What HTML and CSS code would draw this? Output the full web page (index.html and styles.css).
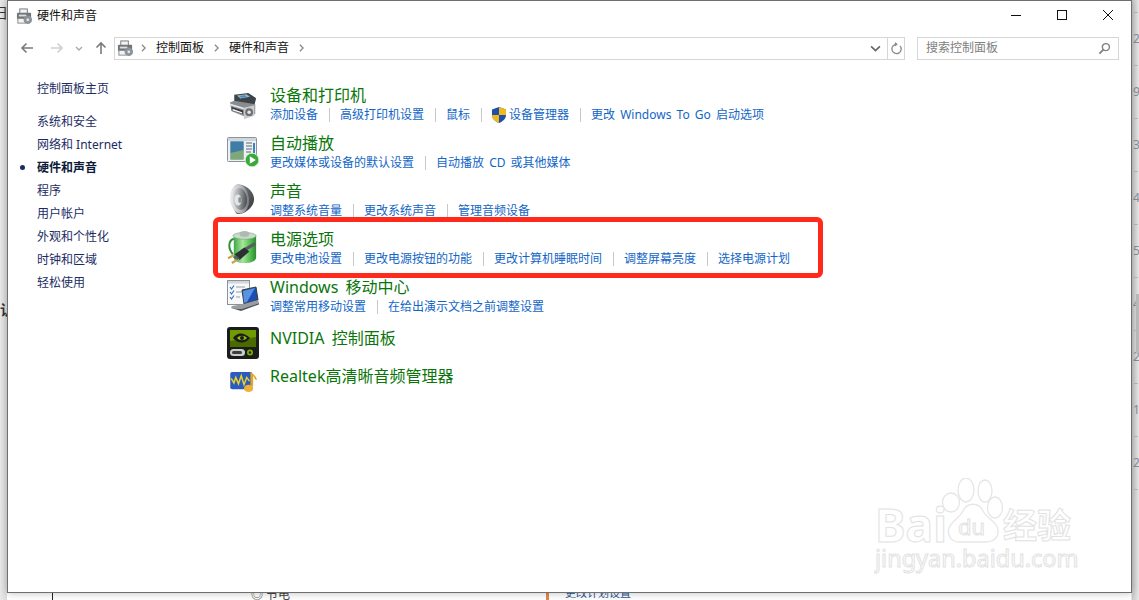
FILE: index.html
```html
<!DOCTYPE html>
<html lang="zh-CN">
<head>
<meta charset="utf-8">
<title>硬件和声音</title>
<link rel="stylesheet" href="styles.css">
</head>
<body>
<svg width="0" height="0" class="defs">
  <defs>
    <linearGradient id="cone" x1="0" y1="0" x2="1" y2="0.2">
      <stop offset="0" stop-color="#f4f5f6"/>
      <stop offset=".55" stop-color="#c4c7ca"/>
      <stop offset="1" stop-color="#7f8387"/>
    </linearGradient>
    <linearGradient id="inner" x1="0" y1="0" x2="1" y2="0.3">
      <stop offset="0" stop-color="#e6e8ea"/>
      <stop offset=".5" stop-color="#a2a6a9"/>
      <stop offset="1" stop-color="#55585b"/>
    </linearGradient>
    <linearGradient id="back" x1="0" y1="0" x2="1" y2="1">
      <stop offset="0" stop-color="#8a8d90"/>
      <stop offset="1" stop-color="#2f3133"/>
    </linearGradient>
    <linearGradient id="cell" x1="0" y1="0" x2="1" y2="0">
      <stop offset="0" stop-color="#3fa845"/>
      <stop offset=".4" stop-color="#a6e69a"/>
      <stop offset=".75" stop-color="#52bb52"/>
      <stop offset="1" stop-color="#2a8a30"/>
    </linearGradient>
    <symbol id="chev" viewBox="0 0 6 10">
      <path d="M1 1l4 4-4 4" fill="none" stroke="#8a8a8a" stroke-width="1.600"/>
    </symbol>
    <symbol id="devices" viewBox="0 0 32 32">
      <path d="M6 3 22 1l9 6-2 8-23-3z" fill="#3d4347"/>
      <path d="M9 4l11-1.500 4 3-11 2z" fill="#8fb6cf"/>
      <path d="M12 4.500l6-.8 2 1.800-6 1z" fill="#4d87bb"/>
      <path d="M1 12l5-2 24 4v11l-12 3L3 22z" fill="#8a8d90"/>
      <path d="M1 13l16 5v2L1 15z" fill="#e8e8e8"/>
      <path d="M3 17l13 4v4L3 21z" fill="#34383c"/>
      <path d="M4 19l11 4v1.500L4 21z" fill="#f4f4f4"/>
      <path d="M17 18l12-3v12l-12 4z" fill="#c9cbcd"/>
      <circle cx="23" cy="23" r="4.500" fill="#6d7073"/>
      <circle cx="23" cy="23" r="2" fill="#e4e4e4"/>
    </symbol>
    <symbol id="autoplay" viewBox="0 0 32 32">
      <rect x=".5" y="2.500" width="29" height="24" rx="1" fill="#eef1f4" stroke="#8c9299"/>
      <rect x="1" y="3" width="28" height="3" fill="#cfd6dc"/>
      <rect x="3.500" y="6.500" width="13" height="18" fill="#5f8f97"/>
      <path d="M3.500 6.500h13v9L3.500 18z" fill="#3f7ca8"/>
      <path d="M3.500 18l13-3v9.500h-13z" fill="#7fa878"/>
      <path d="M19 8h6M19 11h6M19 14h6M19 17h5" stroke="#8d959b" stroke-width="1.400"/>
      <rect x="26" y="8" width="2" height="10" fill="#3f82c0"/>
      <circle cx="25" cy="25" r="6.800" fill="#3aa83a" stroke="#d6f0d0" stroke-width=".8"/>
      <path d="M22.800 21.200v7.600l6-3.800z" fill="#fff"/>
    </symbol>
    <symbol id="speaker" viewBox="0 0 32 32">
      <path d="M9 2C15 0 26 6 27 15c1 8-8 16-16 16C5 31 3 4 9 2z" fill="url(#back)"/>
      <ellipse cx="12.500" cy="16" rx="9.500" ry="14.500" fill="url(#cone)" transform="rotate(-6 12.500 16)"/>
      <ellipse cx="13" cy="16" rx="7" ry="11" fill="url(#inner)" transform="rotate(-6 13 16)"/>
      <ellipse cx="11" cy="17" rx="3.500" ry="5.500" fill="#e2e4e6" transform="rotate(-6 11 17)"/>
      <ellipse cx="13" cy="17" rx="1.800" ry="3" fill="#8f9396"/>
    </symbol>
    <symbol id="battery" viewBox="0 0 34 36">
      <path d="M7 5h22a1 1 0 0 1 1 1v22c0 4-5 6-12 6s-11-2-11-6z" fill="url(#cell)"/>
      <ellipse cx="18" cy="6" rx="12" ry="3.500" fill="#c5ddc8" stroke="#7d9a80" stroke-width=".6"/>
      <ellipse cx="18" cy="4" rx="5" ry="3" fill="#aeb9b0"/>
      <path d="M7 9C1 11 1 19 6 25" fill="none" stroke="#2f8f33" stroke-width="2"/>
      <path d="M15 22 29 14" stroke="#5a5d60" stroke-width="3.500"/>
      <path d="M8 25l10-7 5 4-10 9z" fill="#2c2f33"/>
      <path d="M9 26l4 3 -2 2-5-3z" fill="#5b5e61"/>
      <path d="M7 26 1 29M10 31l-5 3" stroke="#c6a24a" stroke-width="2.200"/>
    </symbol>
    <symbol id="mobile" viewBox="0 0 32 32">
      <rect x=".5" y="1.500" width="22" height="24" fill="#f8f8f8" stroke="#8c9299"/>
      <rect x="1" y="2" width="21" height="2.500" fill="#cfd6dc"/>
      <path d="M3 8l1.500 2L7 6.500M3 13l1.500 2L7 11.500M3 18l1.500 2L7 16.500" fill="none" stroke="#2f73c5" stroke-width="1.200"/>
      <path d="M9 8h9M9 13h6M9 18h4" stroke="#9aa0a6" stroke-width="1.200"/>
      <path d="M15 11l14-3 2 13-14 4z" fill="#1c4fb0" stroke="#3a3d40"/>
      <path d="M16 12l12-3-8 14-3 .8z" fill="#5b93e3"/>
      <path d="M17 25l14-4 1 3-18 6-10-1 1-2z" fill="#9a9da0"/>
      <path d="M4 29l10 1 18-6v1.500L14 32z" fill="#55585b"/>
    </symbol>
    <symbol id="nvidia" viewBox="0 0 32 32">
      <rect width="32" height="32" rx="3" fill="#1a1c1c"/>
      <rect x="3" y="3" width="26" height="17" fill="#4a6a00"/>
      <path d="M3 3h26v7L3 14z" fill="#6f9a00"/>
      <path d="M6 11c4-6 11-6 17 0-5 6-12 6-17 0z" fill="#1a1c1c"/>
      <path d="M10 11c3-3 7-3 10 0-3 3-7 3-10 0z" fill="#91c400"/>
      <circle cx="15" cy="11" r="2" fill="#1a1c1c"/>
      <rect x="3" y="22" width="15" height="7" rx="3.500" fill="#c9cbcb"/>
      <rect x="5" y="24" width="10" height="3" rx="1.500" fill="#3c3e3e"/>
      <circle cx="23" cy="25.500" r="3" fill="#7bb000"/>
      <circle cx="23" cy="25.500" r="1.200" fill="#1a1c1c"/>
    </symbol>
    <symbol id="realtek" viewBox="0 0 32 24">
      <rect x="1" y="1" width="24" height="19" rx="2" fill="#2a5cc0"/>
      <path d="M2 8l3 5 2-6 3 7 3-9 3 10 3-8 3 4" fill="none" stroke="#f0d020" stroke-width="1.600"/>
      <path d="M23 1c3 2 7 5 7 9l-2-1-2-4v11h-3z" fill="#e2a52c"/>
      <ellipse cx="21" cy="19" rx="5" ry="4" fill="#eeb032"/>
    </symbol>
    <symbol id="cp" viewBox="0 0 18 18">
      <rect x="4" y="1" width="8" height="5" fill="#f2f2f2" stroke="#777"/>
      <rect x="1" y="5" width="15" height="7" rx="1" fill="#6f757a"/>
      <rect x="3" y="7" width="8" height="2" fill="#dcdcdc"/>
      <rect x="2" y="11" width="8" height="5" fill="#f4f4f4" stroke="#888"/>
      <circle cx="12.500" cy="12.500" r="4.500" fill="#8d9398"/>
      <circle cx="12.500" cy="12.500" r="1.500" fill="#dfe8f0"/>
    </symbol>
  </defs>
</svg>

<main class="desktop">
  <div class="behind behind-top">日</div>
  <div class="behind behind-left">认</div>
  <div class="ruler-ticks"></div>
  <div class="ruler">
    <span>2</span><span>9</span><span>3</span><span>4</span><span>5</span><span>4</span><span>2</span><span>1</span><span>2</span>
  </div>
  <div class="scroll-thumb"></div>
  <div class="under-line"></div>
  <div class="under-orange"></div>
  <div class="under-radio">◎ 节电</div>
  <div class="under-link">更改计划设置</div>

  <section class="window">
    <header class="titlebar">
      <svg class="title-icon"><use href="#cp"/></svg>
      <span class="title-text">硬件和声音</span>
      <div class="controls">
        <svg class="ctl" viewBox="0 0 46 30"><path d="M18 15.500h10" stroke="#111" fill="none"/></svg>
        <svg class="ctl" viewBox="0 0 46 30"><rect x="18.500" y="10.500" width="9" height="9" stroke="#111" fill="none"/></svg>
        <svg class="ctl" viewBox="0 0 46 30"><path d="M18 10l10 10M28 10L18 20" stroke="#111" fill="none"/></svg>
      </div>
    </header>

    <nav class="navbar">
      <svg class="nav-btn" viewBox="0 0 16 16"><path d="M14 8H3M7.500 3.500 3 8l4.500 4.500" fill="none" stroke="#7a7a7a" stroke-width="1.600"/></svg>
      <svg class="nav-btn dim" viewBox="0 0 16 16"><path d="M2 8h11M8.500 3.500 13 8l-4.500 4.500" fill="none" stroke="#cfcfcf" stroke-width="1.600"/></svg>
      <svg class="nav-drop" viewBox="0 0 10 10"><path d="M2 4l3 3 3-3" fill="none" stroke="#a8a8a8" stroke-width="1.400"/></svg>
      <svg class="nav-btn" viewBox="0 0 16 16"><path d="M8 14V3M3.500 7.500 8 3l4.500 4.500" fill="none" stroke="#7a7a7a" stroke-width="1.600"/></svg>
      <div class="address">
        <svg class="addr-icon"><use href="#cp"/></svg>
        <span class="crumb-sep"><svg><use href="#chev"/></svg></span>
        <span class="crumb">控制面板</span>
        <span class="crumb-sep"><svg><use href="#chev"/></svg></span>
        <span class="crumb">硬件和声音</span>
        <span class="crumb-sep"><svg><use href="#chev"/></svg></span>
        <svg class="addr-drop" viewBox="0 0 10 10"><path d="M1 3l4 4 4-4" fill="none" stroke="#666" stroke-width="1.500"/></svg>
        <div class="refresh">
          <svg viewBox="0 0 14 14"><path d="M10.800 4.200A5 5 0 1 1 7 2.500H5M5.500.8 7.300 2.500 5.500 4.200" fill="none" stroke="#8a8a8a" stroke-width="1.400"/></svg>
        </div>
      </div>
      <div class="search">
        <span>搜索控制面板</span>
        <svg viewBox="0 0 14 14"><circle cx="8.500" cy="5.500" r="3.800" fill="none" stroke="#808080" stroke-width="1.500"/><path d="M5.800 8.200 1.500 12.500" stroke="#808080" stroke-width="2"/></svg>
      </div>
    </nav>

    <div class="body">
      <aside class="sidebar">
        <a class="side-home">控制面板主页</a>
        <a>系统和安全</a>
        <a>网络和 Internet</a>
        <a class="current">硬件和声音</a>
        <a>程序</a>
        <a>用户帐户</a>
        <a>外观和个性化</a>
        <a>时钟和区域</a>
        <a>轻松使用</a>
      </aside>

      <div class="content">
        <article class="row">
          <svg class="row-icon icon-devices"><use href="#devices"/></svg>
          <div class="row-text">
            <h2>设备和打印机</h2>
            <p class="links"><a>添加设备</a><a>高级打印机设置</a><a>鼠标</a><a class="with-shield"><svg class="shield" viewBox="0 0 14 16"><path d="M7 0 14 2.500V8c0 4-3.500 6.500-7 8C3.500 14.500 0 12 0 8V2.500z" fill="#1f4fa8"/><path d="M7 0 14 2.500V8H7z" fill="#f0b91e"/><path d="M7 8H0c0 4 3.500 6.500 7 8z" fill="#f0b91e"/></svg>设备管理器</a><a>更改 Windows To Go 启动选项</a></p>
          </div>
        </article>
        <article class="row">
          <svg class="row-icon"><use href="#autoplay"/></svg>
          <div class="row-text">
            <h2>自动播放</h2>
            <p class="links"><a>更改媒体或设备的默认设置</a><a>自动播放 CD 或其他媒体</a></p>
          </div>
        </article>
        <article class="row">
          <svg class="row-icon"><use href="#speaker"/></svg>
          <div class="row-text">
            <h2>声音</h2>
            <p class="links"><a>调整系统音量</a><a>更改系统声音</a><a>管理音频设备</a></p>
          </div>
        </article>
        <article class="row">
          <svg class="row-icon icon-battery"><use href="#battery"/></svg>
          <div class="row-text">
            <h2>电源选项</h2>
            <p class="links"><a>更改电池设置</a><a>更改电源按钮的功能</a><a>更改计算机睡眠时间</a><a>调整屏幕亮度</a><a>选择电源计划</a></p>
          </div>
        </article>
        <article class="row">
          <svg class="row-icon"><use href="#mobile"/></svg>
          <div class="row-text">
            <h2>Windows 移动中心</h2>
            <p class="links"><a>调整常用移动设置</a><a>在给出演示文档之前调整设置</a></p>
          </div>
        </article>
        <article class="row row-nvidia">
          <svg class="row-icon"><use href="#nvidia"/></svg>
          <div class="row-text"><h2>NVIDIA 控制面板</h2></div>
        </article>
        <article class="row row-realtek">
          <svg class="row-icon icon-realtek"><use href="#realtek"/></svg>
          <div class="row-text"><h2>Realtek高清晰音频管理器</h2></div>
        </article>
      </div>
    </div>

    <div class="highlight"></div>

    <svg class="watermark" viewBox="0 0 210 105" aria-label="Baidu 经验">
      <g class="wm-paw">
        <ellipse cx="77" cy="24.500" rx="8.500" ry="9.500"/>
        <ellipse cx="92" cy="12" rx="8" ry="12"/>
        <ellipse cx="111" cy="13" rx="7" ry="11"/>
        <ellipse cx="121" cy="29.500" rx="7.500" ry="10.500"/>
        <path d="M86 64c-10 0-13-8-11-14 3-8 10-9 14-17 4-9 16-9 20 0 4 8 14 10 15 19 1 8-5 12-13 12z"/>
      </g>
      <text class="wm-big" x="1" y="64">Bai</text>
      <text class="wm-du" x="84" y="57">du</text>
      <text class="wm-cn" x="129" y="60">经验</text>
      <text class="wm-small" x="1" y="89">jingyan.baidu.com</text>
    </svg>
  </section>
</main>
</body>
</html>
```
FILE: styles.css
```css
* { box-sizing: border-box; }
html, body { margin: 0; padding: 0; height: 100%; overflow: hidden; background: #fff; }
body { font-family: "Noto Sans", "Noto Sans CJK SC", sans-serif; font-size: 12px; }
.defs { position: absolute; }

.desktop {
  position: relative;
  width: 1139px;
  height: 600px;
  overflow: hidden;
  background: linear-gradient(90deg, #e9e9e9 0, #dcdcdc 7px, #fff 7px, #fff 1131px, #c9c9c9 1132px, #e8e8e8 1139px);
}

.behind { position: absolute; color: #333; font-size: 14px; line-height: 16px; }
.behind-top { left: -6px; top: 5px; }
.behind-left { left: 0; top: 302px; font-weight: 700; }

.ruler {
  position: absolute;
  left: 1133px;
  top: 31px;
  display: flex;
  flex-direction: column;
  gap: 37px;
  color: #8a8f96;
  font-size: 12px;
  line-height: 16px;
}
.ruler-ticks {
  position: absolute;
  left: 1134px;
  top: 12px;
  width: 4px;
  height: 480px;
  background: repeating-linear-gradient(180deg, #bcbcbc 0, #bcbcbc 1px, transparent 1px, transparent 53px);
}
.scroll-thumb { position: absolute; left: 1136px; top: 294px; width: 3px; height: 59px; background: #bdbdbd; }
.under-line { position: absolute; left: 52px; top: 592px; width: 1px; height: 8px; background: #222; }
.under-orange { position: absolute; left: 546px; top: 592px; width: 3px; height: 8px; background: #e08a4a; }
.under-radio { position: absolute; left: 251px; top: 587px; font-size: 12px; line-height: 16px; color: #444; }
.under-link { position: absolute; left: 565px; top: 586px; font-size: 11px; line-height: 14px; color: #2a5a9a; }

.window {
  position: absolute;
  left: 7px;
  top: 0;
  width: 1125px;
  height: 593px;
  background: #fff;
  border: 1px solid #6f6f6f;
  box-shadow: 0 0 8px rgba(0, 0, 0, .25);
}

.titlebar { display: flex; align-items: center; height: 30px; padding-left: 8px; color: #111; }
.title-icon { width: 17px; height: 17px; margin-top: 1px; }
.title-text { margin-left: 4px; line-height: 16px; }
.controls { display: flex; margin-left: auto; margin-top: -2px; }
.ctl { width: 46px; height: 30px; }

.navbar { display: flex; align-items: center; height: 24px; margin-top: 5px; padding-left: 11px; }
.nav-btn { width: 16px; height: 16px; flex: none; }
.nav-btn.dim { margin-left: 14px; }
.nav-drop { width: 10px; height: 10px; margin-left: 9px; flex: none; }
.nav-drop + .nav-btn { margin-left: 9px; }

.address {
  display: flex;
  align-items: center;
  width: 791px;
  height: 23px;
  margin-left: 5px;
  padding-left: 2px;
  border: 1px solid #d6d6d6;
  color: #111;
}
.addr-icon { width: 17px; height: 17px; flex: none; }
.crumb { line-height: 16px; margin-right: 3px; }
.crumb-sep { display: flex; justify-content: center; width: 22px; padding-right: 3px; }
.crumb-sep svg { width: 5px; height: 8px; }
.addr-drop { width: 11px; height: 11px; margin-left: auto; margin-right: 6px; flex: none; }
.refresh { display: flex; align-items: center; justify-content: center; width: 17px; height: 21px; border-left: 1px solid #d6d6d6; flex: none; }
.refresh svg { width: 13px; height: 13px; }

.search {
  display: flex;
  align-items: center;
  justify-content: space-between;
  width: 202px;
  height: 23px;
  margin-left: 12px;
  padding: 0 7px 2px 8px;
  border: 1px solid #d6d6d6;
  color: #808080;
}
.search svg { width: 13px; height: 13px; flex: none; margin-top: 2px; }

.body { display: flex; }

.sidebar { display: flex; flex-direction: column; width: 219px; flex: none; padding: 20px 0 0 29px; }
.sidebar a { height: 23px; line-height: 18px; color: #1b2c63; white-space: nowrap; }
.sidebar .side-home { height: 33px; }
.sidebar .current { position: relative; font-weight: 700; color: #0d1b3a; }
.sidebar .current::before {
  content: "";
  position: absolute;
  left: -17px;
  top: 6px;
  width: 5px;
  height: 5px;
  border-radius: 50%;
  background: #1b2c63;
}

.content { display: flex; flex-direction: column; padding-top: 24px; }
.row { display: flex; height: 48px; }
.row-icon { width: 32px; height: 32px; margin: 3px 11px 0 0; flex: none; }
.icon-devices { width: 28px; height: 28px; margin: 8px 13px 0 2px; }
.icon-battery { width: 33px; height: 35px; margin: 2px 10px 0 0; }
.row-text { min-width: 0; }
.row h2 { margin: 0; font-size: 16px; font-weight: 400; line-height: 22px; word-spacing: 3px; color: #0a760a; white-space: nowrap; }
.links { display: flex; align-items: center; height: 17px; margin: 0; word-spacing: 2px; color: #1266c6; white-space: nowrap; }
.links a { display: flex; align-items: center; height: 14px; line-height: 14px; }
.links a + a { margin-left: 11px; padding-left: 10px; border-left: 1px solid #c8c8c8; }
.shield { width: 14px; height: 16px; margin-right: 3px; }

.row-nvidia { height: 38px; margin-top: 3px; }
.row-nvidia h2, .row-realtek h2 { line-height: 22px; }
.row-nvidia .row-icon { margin-top: 0; }
.row-realtek { height: 30px; }
.row-realtek .row-icon { width: 30px; height: 22px; margin: 6px 11px 0 2px; }

.highlight {
  position: absolute;
  left: 205px;
  top: 216px;
  width: 610px;
  height: 61px;
  border: 5px solid #ff2a1c;
  border-radius: 6px;
  pointer-events: none;
}

.watermark { position: absolute; left: 866px; top: 477px; width: 210px; height: 105px; pointer-events: none; }
.wm-paw { fill: none; stroke: #e6e6e6; stroke-width: 1.300; }
.watermark text { fill: #fff; stroke: #e2e2e2; stroke-width: 1; font-family: "Noto Sans", "Noto Sans CJK SC", sans-serif; }
.wm-big { font-size: 46px; font-weight: 700; }
.wm-du { font-size: 22px; }
.wm-cn { font-size: 34px; font-weight: 700; }
.wm-small { font-size: 23.500px; }
```
